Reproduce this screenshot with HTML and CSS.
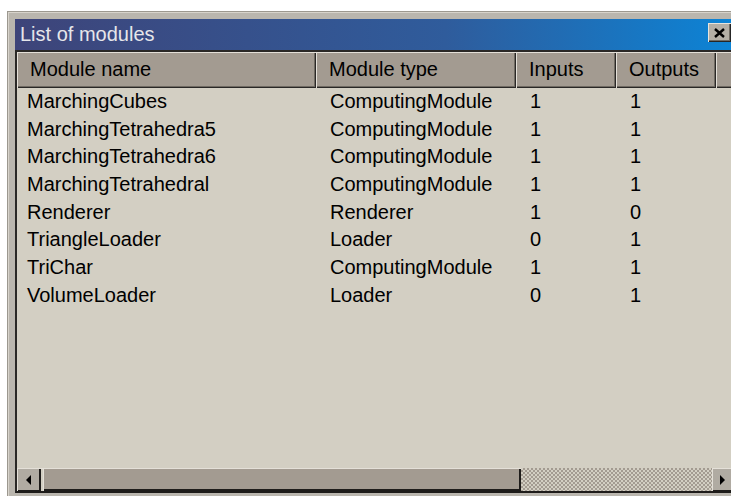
FILE: index.html
```html
<!DOCTYPE html>
<html>
<head>
<meta charset="utf-8">
<title>List of modules</title>
<link rel="stylesheet" href="styles.css">
</head>
<body>
<div class="window">
  <div class="titlebar">
    <span class="title">List of modules</span>
    <button class="close" aria-label="Close">
      <svg width="11" height="10" viewBox="0 0 11 10"><path d="M1 1 L10 9 M10 1 L1 9" stroke="#000" stroke-width="2.4" fill="none"/></svg>
    </button>
  </div>
  <div class="listview">
    <div class="header">
      <div class="hcell">Module name</div>
      <div class="hcell">Module type</div>
      <div class="hcell">Inputs</div>
      <div class="hcell">Outputs</div>
      <div class="hcell"></div>
    </div>
    <div class="rows">
      <div class="row"><span>MarchingCubes</span><span>ComputingModule</span><span>1</span><span>1</span></div>
      <div class="row"><span>MarchingTetrahedra5</span><span>ComputingModule</span><span>1</span><span>1</span></div>
      <div class="row"><span>MarchingTetrahedra6</span><span>ComputingModule</span><span>1</span><span>1</span></div>
      <div class="row"><span>MarchingTetrahedral</span><span>ComputingModule</span><span>1</span><span>1</span></div>
      <div class="row"><span>Renderer</span><span>Renderer</span><span>1</span><span>0</span></div>
      <div class="row"><span>TriangleLoader</span><span>Loader</span><span>0</span><span>1</span></div>
      <div class="row"><span>TriChar</span><span>ComputingModule</span><span>1</span><span>1</span></div>
      <div class="row"><span>VolumeLoader</span><span>Loader</span><span>0</span><span>1</span></div>
    </div>
    <div class="hscroll">
      <div class="sbtn">
        <svg width="6" height="10" viewBox="0 0 6 10"><path d="M5 0 L0 5 L5 10 Z" fill="#000"/></svg>
      </div>
      <div class="thumb"></div>
      <div class="track"></div>
      <div class="sbtn right">
        <svg width="6" height="10" viewBox="0 0 6 10"><path d="M0 0 L5 5 L0 10 Z" fill="#000"/></svg>
      </div>
    </div>
  </div>
</div>
</body>
</html>
```

FILE: styles.css
```css
html, body {
  margin: 0;
  padding: 0;
  background: #ffffff;
  width: 731px;
  height: 496px;
  overflow: hidden;
}

.window {
  margin: 11px 0 0 7px;
  width: 726px;
  padding: 8px 0 6px 8px;
  box-sizing: border-box;
  background: #bab6ae;
  box-shadow: inset 1px 1px #9c988f, inset 2px 2px #d8d4cc;
  font-family: "Liberation Sans", Arial, sans-serif;
}

.titlebar {
  height: 31px;
  display: flex;
  align-items: flex-start;
  justify-content: space-between;
  background: linear-gradient(to right, #3e4479 0%, #2f5c9c 60%, #0c84d6 100%);
}

.title {
  color: #e6e6ea;
  font-size: 20px;
  line-height: 31px;
  padding-left: 5px;
}

.close {
  margin: 4px 2px 0 0;
  width: 23px;
  height: 19px;
  padding: 0;
  border: none;
  background: #b4afa6;
  box-shadow: inset 1px 1px #e8e4dc, inset -1px -1px #262626, inset -2px -2px #6f6a62;
  display: flex;
  align-items: center;
  justify-content: center;
}

.listview {
  background: #d3cfc3;
  border-top: 2px solid #2a2826;
  border-left: 2px solid #2a2826;
  border-bottom: 2px solid #1e1c1a;
  font-size: 20px;
  color: #000;
}

.header {
  display: grid;
  grid-template-columns: 299px 200px 100px 100px 1fr;
  height: 36px;
}

.hcell {
  background: #a39b91;
  padding-left: 13px;
  line-height: 35px;
  box-shadow: inset 1px 1px #e4e0d8, inset -1px -1px #2a2826, inset -2px -2px #6f6a62;
  white-space: nowrap;
  overflow: hidden;
}

.rows {
  height: 380px;
  padding-top: 0;
}

.row {
  display: grid;
  grid-template-columns: 299px 200px 100px 100px;
  height: 27.7px;
  line-height: 27.7px;
}

.row span {
  padding-left: 14px;
  white-space: nowrap;
}

.row span:first-child {
  padding-left: 10px;
}

.hscroll {
  display: flex;
  height: 23px;
  box-shadow: inset 0 1px #e4e0d8;
}

.sbtn {
  width: 24px;
  flex: none;
  background: #b0aba2;
  box-shadow: inset 1px 1px #e4e0d8, inset -2px -1px #1e1c1a;
  display: flex;
  align-items: center;
  justify-content: center;
}

.sbtn.right {
  width: 21px;
}

.thumb {
  width: 478px;
  margin-left: 2px;
  flex: none;
  background: #a39b91;
  box-shadow: inset 1px 1px #e4e0d8, inset -2px -2px #1e1c1a;
}

.track {
  flex: 1;
  background-color: #d3cfc3;
  background-image: repeating-conic-gradient(#a39b91 0 25%, #d3cfc3 0 50%);
  background-size: 4px 4px;
}
```
